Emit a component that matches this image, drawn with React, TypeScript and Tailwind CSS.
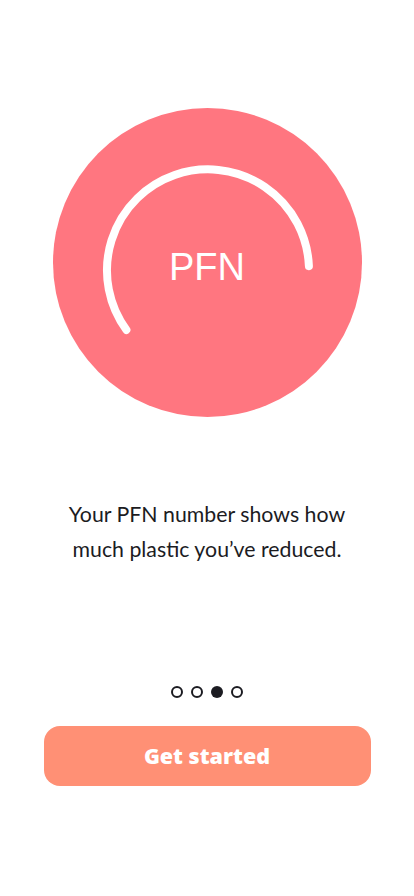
export default function App() {
  return (
    <div className="w-[414px] h-[896px] bg-white flex flex-col items-center" style={{ fontFamily: 'Lato, "Noto Sans", sans-serif' }}>
      {/* PFN circle */}
      <div className="mt-[108px] w-[309px] h-[309px] rounded-full bg-[#ff7680] relative flex items-center justify-center">
        <svg className="absolute inset-0" width="309" height="309" viewBox="0 0 309 309">
          <path
            d="M 73.4 221.9 A 101 101 0 1 1 255.9 158.2"
            fill="none"
            stroke="#ffffff"
            strokeWidth="8"
            strokeLinecap="round"
          />
        </svg>
        <span className="relative text-white text-[38px] leading-none mt-[8px]" style={{ fontFamily: '"Liberation Sans", Arial, sans-serif' }}>
          PFN
        </span>
      </div>

      {/* description */}
      <p className="mt-[80px] w-[320px] text-center text-[21.3px] leading-[35px] text-[#1c1c1f]">
        Your PFN number shows how much plastic you’ve reduced.
      </p>

      {/* pager dots */}
      <div className="mt-[119px] flex items-center gap-[8px]">
        <span className="w-[12px] h-[12px] rounded-full border-2 border-[#1c1c22]" />
        <span className="w-[12px] h-[12px] rounded-full border-2 border-[#1c1c22]" />
        <span className="w-[12px] h-[12px] rounded-full bg-[#1c1c22]" />
        <span className="w-[12px] h-[12px] rounded-full border-2 border-[#1c1c22]" />
      </div>

      {/* CTA */}
      <button className="mt-[28px] w-[327px] h-[60px] rounded-[16px] bg-[#ff9075] text-white text-[21.5px] font-extrabold" style={{ fontFamily: '"Open Sans", sans-serif' }}>
        Get started
      </button>
    </div>
  );
}
